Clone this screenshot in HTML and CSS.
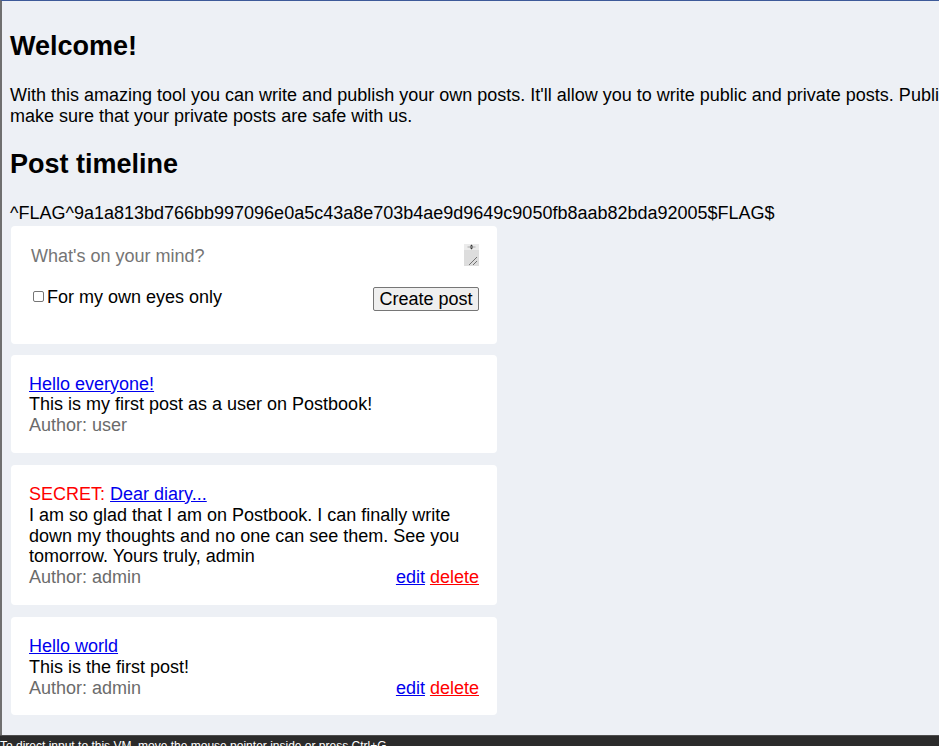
FILE: index.html
```html
<!DOCTYPE html>
<html lang="en">
<head>
<meta charset="utf-8">
<title>Postbook</title>
<link rel="stylesheet" href="styles.css">
</head>
<body>
<div class="vm">
  <div class="screen">
    <div class="page">
      <h2 class="title">Welcome!</h2>
      <p class="intro">With this amazing tool you can write and publish your own posts. It'll allow you to write public and private posts. Public posts can be read by anyone that signs up. Private posts can only be read by you. See it as your own diary. We'll<br>make sure that your private posts are safe with us.</p>
      <h2 class="title">Post timeline</h2>
      <div class="flag">^FLAG^9a1a813bd766bb997096e0a5c43a8e703b4ae9d9649c9050fb8aab82bda92005$FLAG$</div>

      <form class="card form-card">
        <div class="composer-wrap">
          <textarea class="composer" placeholder="What's on your mind?"></textarea>
          <svg class="scrollbar" width="15" height="22" viewBox="0 0 15 22" aria-hidden="true">
            <rect x="0" y="0" width="15" height="22" fill="#dddddd"/>
            <rect x="0" y="0" width="15" height="6" fill="#ebebeb"/>
            <line x1="3.5" y1="3" x2="11.5" y2="3" stroke="#9a9a9a" stroke-width="0.8"/>
            <path d="M7.5 0.6 L5.8 2.4 L9.2 2.4 Z" fill="#333"/>
            <path d="M5.8 3.6 L9.2 3.6 L7.5 5.4 Z" fill="#333"/>
            <line x1="13" y1="13" x2="5" y2="21" stroke="#555" stroke-width="0.8"/>
            <line x1="13" y1="17" x2="9" y2="21" stroke="#555" stroke-width="0.8"/>
          </svg>
        </div>
        <div class="form-row">
          <label class="private"><input type="checkbox" class="check">For my own eyes only</label>
          <button type="button" class="btn">Create post</button>
        </div>
      </form>

      <div class="card post">
        <div class="post-title"><a class="link" href="#">Hello everyone!</a></div>
        <div class="post-body">This is my first post as a user on Postbook!</div>
        <div class="post-meta"><span class="author">Author: user</span></div>
      </div>

      <div class="card post">
        <div class="post-title"><span class="secret">SECRET:</span> <a class="link" href="#">Dear diary...</a></div>
        <div class="post-body">I am so glad that I am on Postbook. I can finally write down my thoughts and no one can see them. See you tomorrow. Yours truly, admin</div>
        <div class="post-meta"><span class="author">Author: admin</span><span class="actions"><a class="link" href="#">edit</a> <a class="link danger" href="#">delete</a></span></div>
      </div>

      <div class="card post">
        <div class="post-title"><a class="link" href="#">Hello world</a></div>
        <div class="post-body">This is the first post!</div>
        <div class="post-meta"><span class="author">Author: admin</span><span class="actions"><a class="link" href="#">edit</a> <a class="link danger" href="#">delete</a></span></div>
      </div>
    </div>
  </div>
  <div class="statusbar">To direct input to this VM, move the mouse pointer inside or press Ctrl+G.</div>
</div>
</body>
</html>
```

FILE: styles.css
```css
html, body {
  margin: 0;
  padding: 0;
  background: #2b2b2b;
}

.vm {
  width: 939px;
  height: 746px;
  display: flex;
  flex-direction: column;
  overflow: hidden;
}

.screen {
  flex: 1;
  min-height: 0;
  background: #edf0f5;
  border-top: 1px solid #3d5a99;
  border-left: 2px solid #6f6f6f;
  overflow: hidden;
  font-family: "Liberation Sans", Arial, sans-serif;
  font-size: 18px;
  color: #000;
}

.page {
  width: 1600px;
  padding: 8px;
}

.title {
  font-size: 27px;
  font-weight: bold;
  margin: 22.4px 0;
}

.intro {
  margin: 0;
  white-space: nowrap;
}

.flag {
  margin-bottom: 2px;
}

.card {
  background: #fff;
  border-radius: 4px;
  width: 486px;
  box-sizing: border-box;
  margin-left: 1px;
  padding: 18px;
}

.form-card {
  margin-bottom: 11px;
  padding-bottom: 33px;
}

.composer-wrap {
  position: relative;
  width: 450px;
  height: 22px;
  margin: 0 0 21px;
}

.composer {
  display: block;
  width: 450px;
  height: 22px;
  box-sizing: border-box;
  margin: 0;
  padding: 2px 17px 2px 2px;
  border: none;
  outline: none;
  resize: none;
  overflow: hidden;
  font-family: "Liberation Sans", Arial, sans-serif;
  font-size: 18px;
  background: #fff;
  color: #000;
}

.composer::placeholder {
  color: #757575;
}

.scrollbar {
  position: absolute;
  top: 0;
  right: 0;
  display: block;
}

.form-row {
  display: flex;
  justify-content: space-between;
  align-items: flex-start;
}

.private {
  display: flex;
  align-items: center;
  line-height: 20.7px;
}

.check {
  appearance: none;
  -webkit-appearance: none;
  width: 11px;
  height: 11px;
  box-sizing: border-box;
  border: 1px solid #767676;
  border-radius: 2px;
  background: #fff;
  margin: 0 3px 0 4px;
}

.btn {
  width: 106px;
  height: 24px;
  box-sizing: border-box;
  padding: 0;
  border: 1px solid #767676;
  border-radius: 2px;
  background: #efefef;
  font-family: "Liberation Sans", Arial, sans-serif;
  font-size: 18px;
  line-height: 20px;
  color: #000;
}

.post {
  margin-bottom: 12px;
  padding-top: 19px;
  padding-bottom: 17px;
  line-height: 20.8px;
}

.link {
  color: #0000ee;
  text-decoration: underline;
}

.link.danger {
  color: #ff0000;
}

.secret {
  color: #ff0000;
}

.post-meta {
  display: flex;
  justify-content: space-between;
}

.author {
  color: #6b6b6b;
}

.statusbar {
  height: 6px;
  flex: none;
  border-top: 1px solid #4e4e4e;
  background: #2b2b2b;
  color: #fff;
  font-family: "Liberation Sans", Arial, sans-serif;
  font-size: 12px;
  line-height: 12px;
  padding-top: 4px;
  box-sizing: content-box;
  overflow: hidden;
  white-space: nowrap;
}
```
